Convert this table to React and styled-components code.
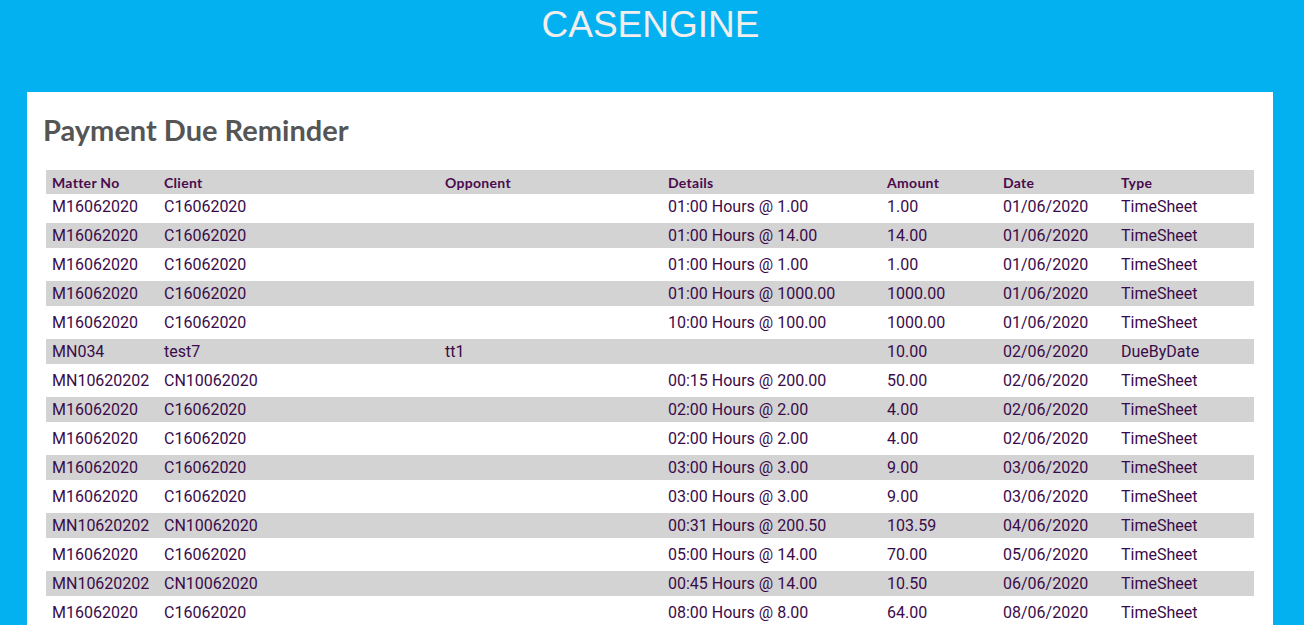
import React from 'react';
import styled, { createGlobalStyle } from 'styled-components';

const GlobalStyle = createGlobalStyle`
  html {
    scrollbar-width: none;
  }
  body {
    margin: 0;
    background: #03b1f0;
    font-family: Roboto, "Liberation Sans", sans-serif;
  }
`;

const Banner = styled.header`
  box-sizing: border-box;
  height: 92px;
  padding: 4px 3px 0 0;
  text-align: center;
  font-family: "Liberation Sans", Arial, sans-serif;
  font-size: 37px;
  line-height: 42px;
  color: #f2eeee;
`;

const Card = styled.main`
  box-sizing: border-box;
  width: 1246px;
  margin-left: 27px;
  padding: 21px 19px 20px;
  background: #fff;
`;

const Title = styled.h1`
  margin: 0 0 23px -3px;
  font-family: Lato, "Open Sans", sans-serif;
  font-weight: 700;
  font-size: 29px;
  line-height: 34px;
  color: #555;
`;

const cols = '112px 281px 223px 219px 116px 118px 139px';

const HeadRow = styled.div`
  display: grid;
  grid-template-columns: ${cols};
  height: 24px;
  align-items: center;
  background: #d3d3d3;
`;

const HeadCell = styled.div`
  padding-left: 6px;
  font-family: Lato, "Open Sans", sans-serif;
  font-weight: 700;
  font-size: 14px;
  letter-spacing: 0.3px;
  color: #4a0a4e;
`;

const Body = styled.div`
  display: flex;
  flex-direction: column;
  gap: 4px;
`;

const Row = styled.div`
  display: grid;
  grid-template-columns: ${cols};
  height: 25px;
  align-items: center;
  background: ${(p) => (p.$shade ? '#d3d3d3' : 'transparent')};
`;

const Cell = styled.div`
  padding-left: 6px;
  font-size: 16px;
  line-height: 25px;
  color: #3a0b4a;
  white-space: nowrap;
`;

const headers = ['Matter No', 'Client', 'Opponent', 'Details', 'Amount', 'Date', 'Type'];

const rows = [
  ['M16062020', 'C16062020', '', '01:00 Hours @ 1.00', '1.00', '01/06/2020', 'TimeSheet'],
  ['M16062020', 'C16062020', '', '01:00 Hours @ 14.00', '14.00', '01/06/2020', 'TimeSheet'],
  ['M16062020', 'C16062020', '', '01:00 Hours @ 1.00', '1.00', '01/06/2020', 'TimeSheet'],
  ['M16062020', 'C16062020', '', '01:00 Hours @ 1000.00', '1000.00', '01/06/2020', 'TimeSheet'],
  ['M16062020', 'C16062020', '', '10:00 Hours @ 100.00', '1000.00', '01/06/2020', 'TimeSheet'],
  ['MN034', 'test7', 'tt1', '', '10.00', '02/06/2020', 'DueByDate'],
  ['MN10620202', 'CN10062020', '', '00:15 Hours @ 200.00', '50.00', '02/06/2020', 'TimeSheet'],
  ['M16062020', 'C16062020', '', '02:00 Hours @ 2.00', '4.00', '02/06/2020', 'TimeSheet'],
  ['M16062020', 'C16062020', '', '02:00 Hours @ 2.00', '4.00', '02/06/2020', 'TimeSheet'],
  ['M16062020', 'C16062020', '', '03:00 Hours @ 3.00', '9.00', '03/06/2020', 'TimeSheet'],
  ['M16062020', 'C16062020', '', '03:00 Hours @ 3.00', '9.00', '03/06/2020', 'TimeSheet'],
  ['MN10620202', 'CN10062020', '', '00:31 Hours @ 200.50', '103.59', '04/06/2020', 'TimeSheet'],
  ['M16062020', 'C16062020', '', '05:00 Hours @ 14.00', '70.00', '05/06/2020', 'TimeSheet'],
  ['MN10620202', 'CN10062020', '', '00:45 Hours @ 14.00', '10.50', '06/06/2020', 'TimeSheet'],
  ['M16062020', 'C16062020', '', '08:00 Hours @ 8.00', '64.00', '08/06/2020', 'TimeSheet'],
];

export default function App() {
  return (
    <>
      <GlobalStyle />
      <Banner>CASENGINE</Banner>
      <Card>
        <Title>Payment Due Reminder</Title>
        <HeadRow>
          {headers.map((h) => (
            <HeadCell key={h}>{h}</HeadCell>
          ))}
        </HeadRow>
        <Body>
          {rows.map((r, i) => (
            <Row key={i} $shade={i % 2 === 1}>
              {r.map((c, j) => (
                <Cell key={j}>{c}</Cell>
              ))}
            </Row>
          ))}
        </Body>
      </Card>
    </>
  );
}
